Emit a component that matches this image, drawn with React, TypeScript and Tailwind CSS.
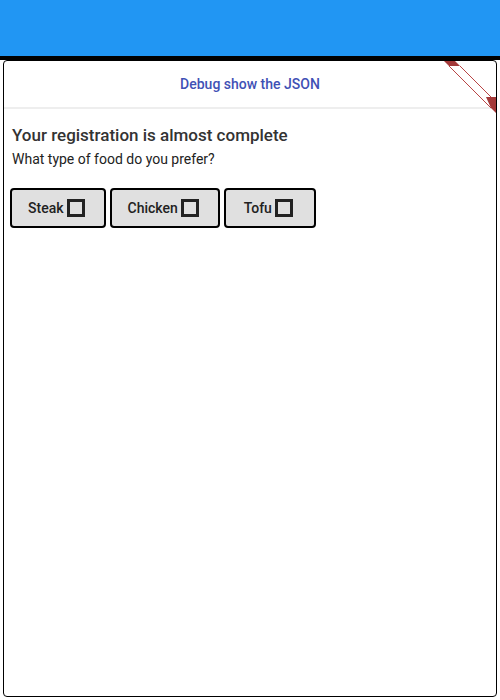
import React, { useState } from 'react';

const options = ['Steak', 'Chicken', 'Tofu'];

const BoxIcon: React.FC<{ checked: boolean }> = ({ checked }) => (
  <svg width="24" height="24" viewBox="0 0 24 24" className="shrink-0">
    <rect x="4.5" y="4.5" width="15" height="15" fill="none" stroke="#222" strokeWidth="3" />
    {checked && <path d="M7.5 12l3 3 6-6" fill="none" stroke="#222" strokeWidth="2.5" />}
  </svg>
);

const App: React.FC = () => {
  const [selected, setSelected] = useState<string[]>([]);

  const toggle = (name: string) => {
    setSelected(prev => (prev.includes(name) ? prev.filter(p => p !== name) : [...prev, name]));
  };

  return (
    <div className="w-[500px] h-[700px] bg-white flex flex-col font-['Roboto','Liberation_Sans',sans-serif]">
      {/* App bar */}
      <div className="h-[56px] bg-[#2196f3] shrink-0" />
      <div className="h-[4px] bg-black shrink-0" />

      <div className="flex-1 px-[3px] pb-[3px] flex flex-col">
        <div className="relative flex-1 border border-black rounded-[4px] overflow-hidden flex flex-col">
          {/* Debug ribbon */}
          <svg width="52" height="52" viewBox="0 0 52 52" className="absolute top-0 right-0">
            <polygon points="0,0 11,0 16,5 5,5" fill="#a33a3a" />
            <line x1="5" y1="5" x2="47" y2="47" stroke="#b84545" strokeWidth="1" />
            <line x1="16" y1="5" x2="52" y2="41" stroke="#b84545" strokeWidth="1" />
            <polygon points="42,36 52,36 52,52 47,47" fill="#a33a3a" />
          </svg>

          {/* Header */}
          <div className="h-[46px] flex items-center justify-center shrink-0">
            <span className="text-[14px] font-medium text-[#3f51b5] mt-[1px]">Debug show the JSON</span>
          </div>
          <div className="h-[2px] bg-[#eeeeee] shrink-0" />

          {/* Content */}
          <div className="px-[6px] pt-[15px]">
            <h1 className="text-[17px] font-medium text-[#333] leading-[22px] ml-[2px]">
              Your registration is almost complete
            </h1>
            <p className="text-[14px] text-[#222] leading-[20px] mt-[3px] ml-[2px]">
              What type of food do you prefer?
            </p>

            <div className="flex gap-[4px] mt-[19px]">
              {options.map(name => (
                <button
                  key={name}
                  onClick={() => toggle(name)}
                  className="h-[40px] min-w-[92px] px-[16px] flex items-center justify-center border-2 border-black rounded-[4px] bg-[#e0e0e0] text-[14px] font-medium text-[#222]"
                >
                  <span>{name}</span>
                  <BoxIcon checked={selected.includes(name)} />
                </button>
              ))}
            </div>
          </div>
        </div>
      </div>
    </div>
  );
};

export default App;
